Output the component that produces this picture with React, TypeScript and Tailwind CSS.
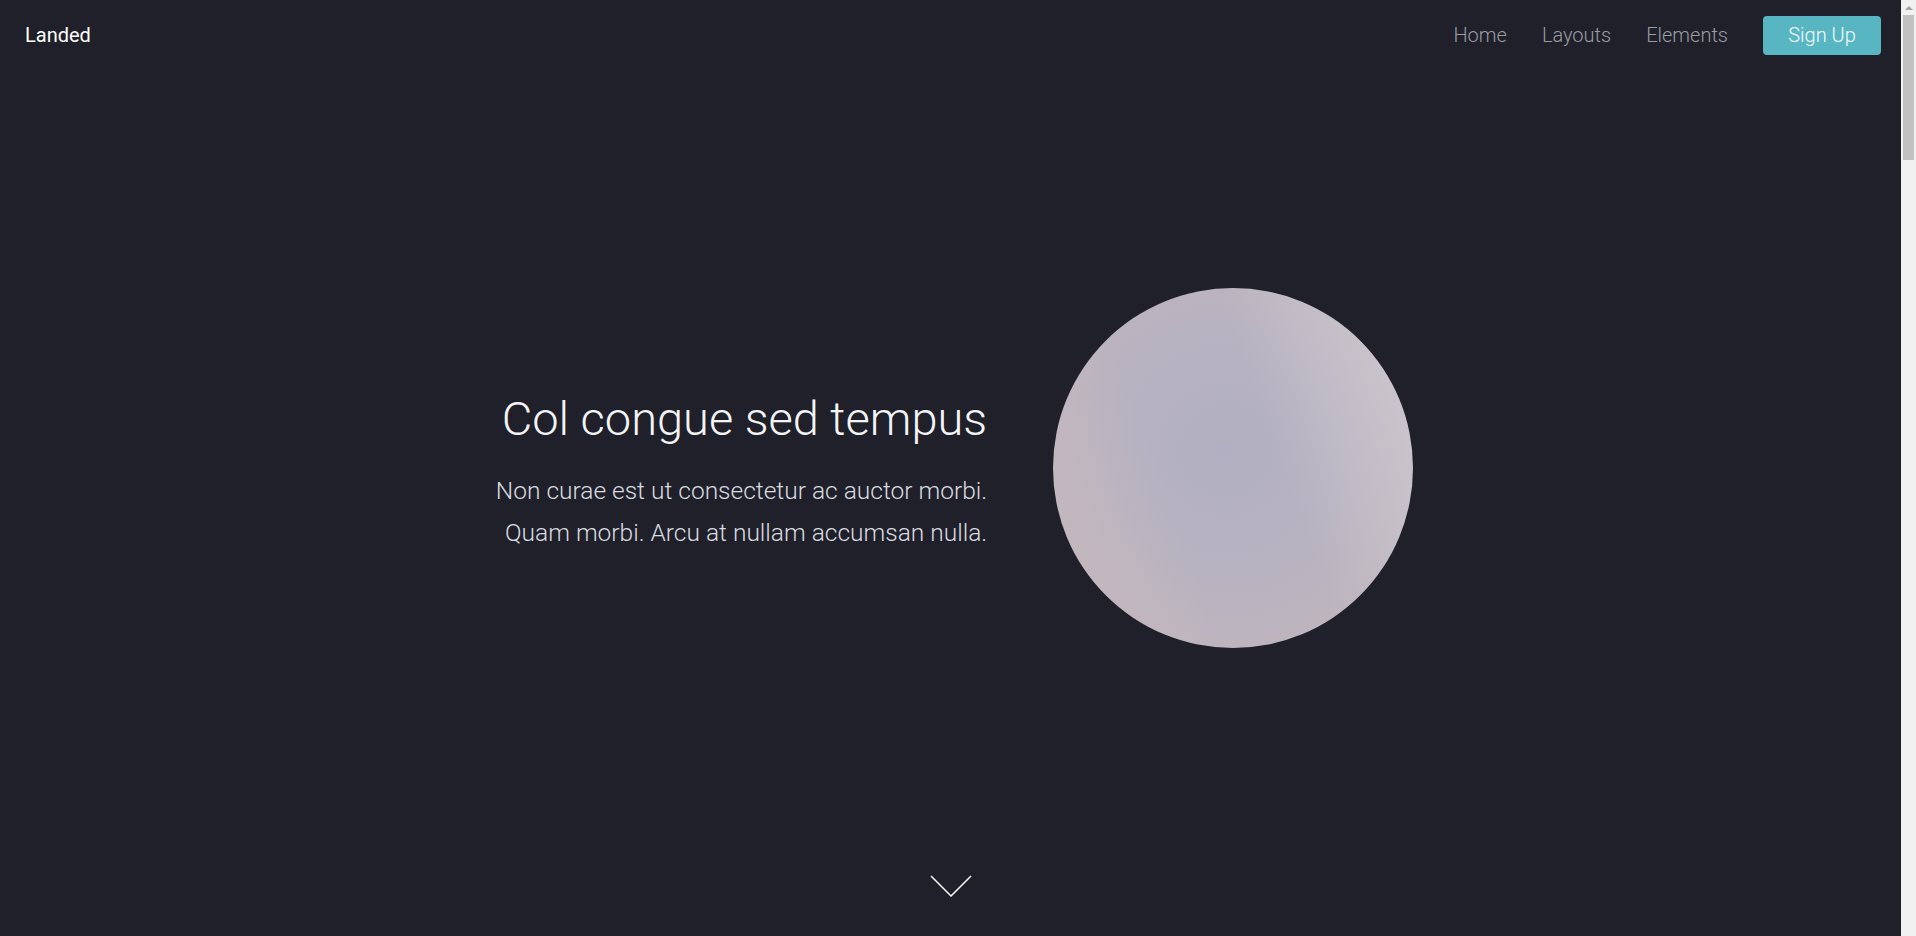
import React from 'react';

const navLinks = ['Home', 'Layouts', 'Elements'];

const Header: React.FC = () => (
  <header className="absolute top-0 inset-x-0 z-10 h-[70px] flex items-center justify-between pl-[25px] pr-[20px] bg-[#1f2029]">
    <a href="#" className="text-[20px] text-white">
      Landed
    </a>
    <nav className="flex items-center gap-[35px]">
      {navLinks.map((link) => (
        <a key={link} href="#" className="text-[20px] font-light text-[#9a9ca3] hover:text-white">
          {link}
        </a>
      ))}
      <a
        href="#"
        className="flex items-center justify-center h-[39px] w-[118px] rounded-[4px] bg-[#58b6c3] text-[20px] font-light text-[#f4fafb]"
      >
        Sign Up
      </a>
    </nav>
  </header>
);

const ChevronDown: React.FC = () => (
  <svg width="42" height="22" viewBox="0 0 42 22" fill="none">
    <path d="M1 1 L21 21 L41 1" stroke="white" strokeWidth="1.5" />
  </svg>
);

const ScrollRail: React.FC = () => (
  <div className="w-[15px] shrink-0 h-screen bg-[#f1f1f1] flex flex-col items-center">
    <div className="mt-[6px] w-0 h-0 border-x-[4px] border-x-transparent border-b-[4px] border-b-[#a3a3a3]" />
    <div className="mt-[5px] w-[11px] h-[145px] bg-[#c1c1c1]" />
  </div>
);

export default function App() {
  return (
    <div className="flex h-screen overflow-hidden bg-[#1f2029] font-['Roboto','Liberation_Sans',sans-serif] antialiased">
      <main className="relative flex-1 min-w-0 h-screen overflow-y-auto [scrollbar-width:none]">
        <Header />

        <section className="relative h-screen flex items-center justify-center gap-[66px] pl-[8px]">
          <div className="text-right pt-[9px]">
            <h2 className="text-[47px] font-light leading-[1.2] text-[#f3f4f6]">Col congue sed tempus</h2>
            <p className="mt-[22px] text-[24.5px] font-light leading-[42px] text-[#d9dbe0]">
              Non curae est ut consectetur ac auctor morbi.
              <br />
              Quam morbi. Arcu at nullam accumsan nulla.
            </p>
          </div>
          <div className="w-[360px] h-[360px] shrink-0 rounded-full bg-[linear-gradient(70deg,rgba(200,185,190,0.9)_0%,transparent_35%,transparent_60%,rgba(208,204,210,0.9)_100%),radial-gradient(circle_at_48%_45%,#b1afc1_0%,#b8b3c1_45%,#c3b6bb_100%)]" />
          <a href="#" className="absolute bottom-[39px] left-1/2 -translate-x-1/2">
            <ChevronDown />
          </a>
        </section>

        <section className="h-[4900px] bg-[#1f2029]" />
      </main>
      <ScrollRail />
    </div>
  );
}
